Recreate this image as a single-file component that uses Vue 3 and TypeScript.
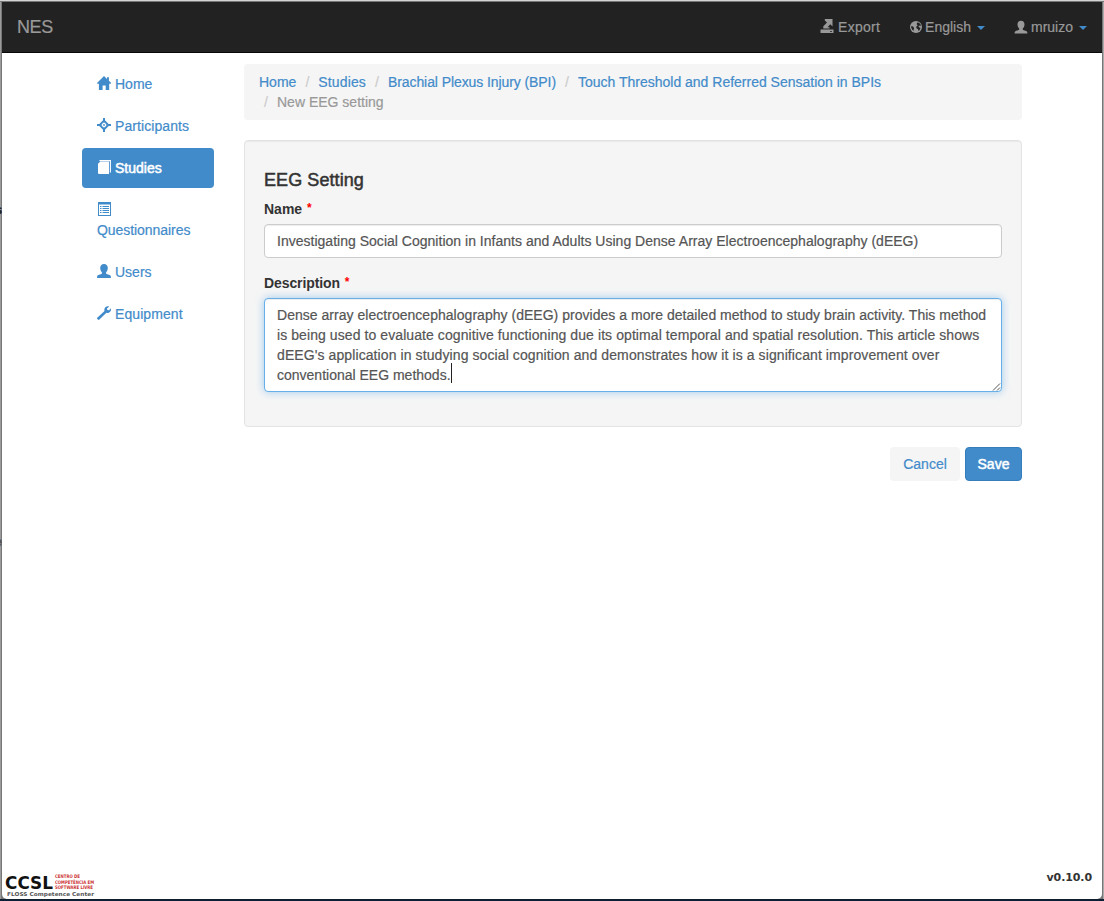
<script setup lang="ts">
interface Item { id: string; label: string; active?: boolean }
const items: Item[] = [
  { id: 'home', label: 'Home' },
  { id: 'participants', label: 'Participants' },
  { id: 'studies', label: 'Studies', active: true },
  { id: 'questionnaires', label: 'Questionnaires' },
  { id: 'users', label: 'Users' },
  { id: 'equipment', label: 'Equipment' },
]
const crumbs = [
  { id: 'c-home', label: 'Home' },
  { id: 'c-studies', label: 'Studies' },
  { id: 'c-bpi', label: 'Brachial Plexus Injury (BPI)' },
  { id: 'c-touch', label: 'Touch Threshold and Referred Sensation in BPIs' },
]
const lines = [
  'Dense array electroencephalography (dEEG) provides a more detailed method to study brain activity. This method',
  'is being used to evaluate cognitive functioning due its optimal temporal and spatial resolution. This article shows',
  "dEEG's application in studying social cognition and demonstrates how it is a significant improvement over",
  'conventional EEG methods.',
]
</script>

<template>
  <div class="desktop">
    <div class="edge-text edge-s">s</div>
    <div class="edge-text edge-e">e</div>
    <div class="window">
      <header class="navbar">
        <a class="brand">NES</a>
        <nav class="top-links">
          <a class="export">
            <svg class="icon" viewBox="0 0 14 14"><path d="M.5 10.500h13v3.500H.5zM4.800 0h7.700v7.500L10.300 5.300 7.500 8.200h2v1.300H3.300V7.200L7 3.500 4.800 1.500z" /><path class="cut" d="M10 11.900h2v.8h-2z" /></svg>
            <span>Export</span>
          </a>
          <a class="english">
            <svg class="icon" viewBox="0 0 14 14"><circle cx="7" cy="7" r="6" /><path class="cut" d="M8.200 2.400 10 2.800 11.600 4.500 12 6 10.600 5.500 9.400 6.600 10.400 7.500 11.500 7.800 10.700 10 9.500 10.900 9 9.200 7.500 8.200 7.200 6.700 8.700 5.300 7.600 4.300zM2.300 6 4 6.500 5.200 8.300 4.600 9.500 4.900 11 3.200 9.800 2.200 7.800z" /></svg>
            <span>English</span><i class="caret"></i>
          </a>
          <a class="user">
            <svg class="icon" viewBox="0 0 14 14"><path d="M7 .7c2.300 0 3.500 1.500 3.500 3.700 0 1.700-.8 3.200-1.700 4v1.100c0 .7 3.500 1.100 4.200 2.100.3.500.4 1.200.4 1.900H.6c0-.7.1-1.400.4-1.900.7-1 4.200-1.400 4.200-2.100V8.400c-.9-.8-1.700-2.300-1.700-4C3.500 2.200 4.700.7 7 .7z" /></svg>
            <span>mruizo</span><i class="caret"></i>
          </a>
        </nav>
      </header>

      <div class="page">
        <aside class="sidebar">
          <a v-for="item in items" :key="item.id" class="side-link" :class="[item.id, { active: item.active }]">
            <svg class="icon" viewBox="0 0 14 14">
              <path v-if="item.id === 'home'" d="M7 0l3 2.900V1.300h1.900v3.400L14.200 7l-.5.700H12.200V14H8.700V9.500H5.600V14H1.900V7.700H.4L0 7z" />
              <g v-else-if="item.id === 'participants'">
                <path d="M6 0h2v4.500H6zM6 9.500h2V14H6zM0 6h4.500v2H0zM9.500 6H14v2H9.500z" />
                <path d="M7 2.700 11.300 7 7 11.300 2.700 7z" fill="none" stroke="currentColor" stroke-width="1.900" /><circle cx="7" cy="7" r=".9" />
              </g>
              <g v-else-if="item.id === 'studies'">
                <path d="M1 3.800 3.300 1.600H12V14H1.800L1 13.200z" />
                <path d="M2.500.6h10.900v12" fill="none" stroke="currentColor" stroke-width="1.100" />
              </g>
              <g v-else-if="item.id === 'questionnaires'">
                <path d="M1 0h13v14H1zM2 2.500V13h11V2.500z" fill-rule="evenodd" />
                <path d="M3 4h1.500v1H3zM5.500 4H12v1H5.500zM3 6h1.500v1H3zM5.500 6H12v1H5.500zM3 8h1.500v1H3zM5.500 8H12v1H5.500zM3 10h1.500v1H3zM5.500 10H12v1H5.500z" />
              </g>
              <path v-else-if="item.id === 'users'" d="M7 0c2.500 0 3.800 1.700 3.800 4 0 1.800-.8 3.400-1.700 4.200v1.300c0 .7 3.700 1.200 4.500 2.200.3.500.4 1.300.4 2.300H0c0-1 .1-1.800.4-2.300.8-1 4.500-1.500 4.500-2.200V8.200C4 7.400 3.200 5.800 3.200 4 3.200 1.700 4.500 0 7 0z" />
              <path v-else d="M12.200.4 10 2.400l.3 1.600 1.700.2 2-1.900c.3 1.400-.1 2.800-1.100 3.700-1 .9-2.300 1.100-3.500.7L2.400 13.600c-.5.4-1.100.4-1.500 0l-.5-.5c-.4-.4-.4-1.100.1-1.500L7.500 4.900c-.4-1.200-.1-2.600.8-3.600C9.300.3 10.900-.1 12.200.4z" />
            </svg>
            <br v-if="item.id === 'questionnaires'" /><span>{{ item.label }}</span>
          </a>
        </aside>

        <main class="content">
          <div class="breadcrumb">
            <div class="crumb-row">
              <template v-for="(c, i) in crumbs" :key="c.id">
                <b v-if="i" class="slash">/</b><a :class="c.id">{{ c.label }}</a>
              </template>
            </div>
            <div class="crumb-row second"><b class="slash">/</b><span class="c-new">New EEG setting</span></div>
          </div>

          <section class="well">
            <h4><span>EEG Setting</span></h4>
            <label><span class="l-name">Name</span> <em>*</em></label>
            <div class="control"><span class="v-name">Investigating Social Cognition in Infants and Adults Using Dense Array Electroencephalography (dEEG)</span></div>
            <label><span class="l-desc">Description</span> <em>*</em></label>
            <div class="control area">
              <div v-for="(line, i) in lines" :key="i" class="line"><span :class="'v-line' + i">{{ line }}</span><i v-if="i === 3" class="cursor"></i></div>
              <svg class="grip" viewBox="0 0 9 9"><path d="M1 8.500 8 1.500M5 8.500 8 5.500" /></svg>
            </div>
          </section>

          <div class="actions">
            <a class="btn cancel"><span>Cancel</span></a>
            <a class="btn save"><span>Save</span></a>
          </div>
        </main>
      </div>

      <footer class="footer">
        <div class="logo">
          <div class="logo-top">
            <svg class="ccsl" viewBox="0 0 49 17"><text x="0" y="15.500" textLength="48" lengthAdjust="spacingAndGlyphs">CCSL</text></svg>
            <svg class="centro" viewBox="0 0 42 17"><text x="1" y="4.400" textLength="25" lengthAdjust="spacingAndGlyphs">CENTRO DE</text><text x="1" y="9.900" textLength="39" lengthAdjust="spacingAndGlyphs">COMPETÊNCIA EM</text><text x="1" y="15.400" textLength="38" lengthAdjust="spacingAndGlyphs">SOFTWARE LIVRE</text></svg>
          </div>
          <svg class="floss" viewBox="0 0 91 7"><text x="2" y="5.500" textLength="87" lengthAdjust="spacingAndGlyphs">FLOSS Competence Center</text></svg>
        </div>
        <strong>v0.10.0</strong>
      </footer>
    </div>
  </div>
</template>

<style>
body { margin: 0; overflow: hidden; }
</style>

<style scoped>
* { box-sizing: border-box; }
.desktop { position: relative; width: 1104px; height: 901px; padding: 2px; background: linear-gradient(#d4d6d6 0 1px, #777 1px 2px, transparent 2px 899px, #0d1f30 899px), linear-gradient(90deg, #9b9b9b 0 1px, #777 1px 1102px, #777 1102px 1103px, #aaa 1103px); overflow: hidden; font: 14px/20px "Liberation Sans", Arial, sans-serif; color: #333; -webkit-text-stroke: .2px currentColor; }
.edge-text { position: absolute; left: -5px; width: 7px; overflow: hidden; font-size: 13px; font-weight: bold; line-height: 14px; color: #222; }
.edge-s { top: 203px; }
.edge-e { top: 535px; color: #555; }
.window { display: flex; flex-direction: column; height: 897px; background: #fff; border-radius: 0 0 5px 5px; overflow: hidden; }
.navbar { display: flex; justify-content: space-between; height: 51px; padding: 0 15px; background: #222; border-bottom: 1px solid #080808; color: #999; }
.brand { font-size: 18px; line-height: 50px; letter-spacing: -.4px; }
.top-links { display: flex; gap: 29px; line-height: 50px; }
.top-links a { display: flex; align-items: center; }
.icon { width: 14px; height: 14px; fill: currentColor; flex: none; -webkit-text-stroke: 0; }
.top-links .icon { margin: -1px 3px 0 0; }
.top-links .export .icon { margin: -3px 4px 0 0; }
.top-links .english .icon { margin-right: 2px; }
.export span { letter-spacing: .25px; }
.cut { fill: #222; }
.caret { border: 4px solid transparent; border-top-color: #428bca; border-bottom: 0; margin-left: 6px; margin-top: 2px; }
.page { display: flex; gap: 30px; padding: 11px 0 0 80px; flex: 1; }
.sidebar { display: flex; flex-direction: column; gap: 2px; width: 132px; }
.side-link { display: block; padding: 10px 15px; color: #428bca; border-radius: 4px; }
.side-link .icon { display: inline-block; vertical-align: -1px; margin-right: 4px; }
.side-link.active { background: #428bca; color: #fff; }
.side-link.active span { -webkit-text-stroke: .5px #fff; }
.participants span, .equipment span { letter-spacing: .08px; }
.questionnaires span { letter-spacing: -.06px; }
.content { width: 778px; }
.breadcrumb { height: 56px; padding: 8px 15px; background: #f5f5f5; border-radius: 4px; color: #428bca; }
.crumb-row { display: flex; height: 20px; white-space: nowrap; }
.slash { width: 22px; text-align: center; font-weight: normal; color: #ccc; }
.c-studies { letter-spacing: .13px; }
.c-bpi { letter-spacing: -.085px; }
.c-touch { letter-spacing: -.005px; }
.second { color: #999; margin-left: -4px; }
.well { height: 287px; margin-top: 20px; padding: 19px; border: 1px solid #e3e3e3; border-radius: 4px; background: #f5f5f5; box-shadow: inset 0 1px 1px rgba(0,0,0,.05); }
h4 { margin: 10px 0 9px; font-size: 18px; line-height: 20px; font-weight: normal; letter-spacing: .08px; -webkit-text-stroke: .5px #333; }
label { display: block; margin-bottom: 5px; font-weight: bold; -webkit-text-stroke: 0; }
label em { display: inline-block; height: 20px; margin-left: 1px; color: #f00; font-style: normal; font-size: 12px; vertical-align: top; line-height: 18px; }
.l-desc { letter-spacing: -.1px; }
.control { height: 34px; padding: 6px 12px; margin-bottom: 15px; border: 1px solid #ccc; border-radius: 4px; background: #fff; color: #555; white-space: nowrap; box-shadow: inset 0 1px 1px rgba(0,0,0,.075); }
.area { position: relative; height: 94px; border-color: #66afe9; box-shadow: inset 0 1px 1px rgba(0,0,0,.075), 0 0 8px rgba(102,175,233,.6); }
.line { display: flex; height: 20px; }
.v-name { letter-spacing: .015px; }
.v-line0 { letter-spacing: .028px; }
.v-line1 { letter-spacing: .08px; }
.v-line2 { letter-spacing: .095px; }
.cursor { width: 1px; height: 20px; margin-top: -2px; background: #222; }
.grip { position: absolute; right: 0; bottom: 0; width: 9px; height: 9px; fill: none; stroke: #444; stroke-width: .9; }
.actions { display: flex; justify-content: flex-end; gap: 5px; margin-top: 20px; }
.btn { height: 34px; padding: 7px 0; text-align: center; border-radius: 4px; }
.cancel { width: 70px; background: #f5f5f5; color: #428bca; }
.save { width: 57px; padding: 6px 0; background: #428bca; border: 1px solid #357ebd; color: #fff; -webkit-text-stroke: .5px #fff; }
.footer { display: flex; justify-content: space-between; height: 27px; padding: 0 10px 0 3px; }
.logo { display: flex; flex-direction: column; width: 91px; -webkit-text-stroke: 0; }
.logo-top { display: flex; height: 18px; }
.ccsl { width: 49px; height: 17px; margin-top: 1px; font: bold 18.500px "DejaVu Sans", sans-serif; fill: #111; overflow: visible; }
.centro { width: 42px; height: 17px; margin-top: 2px; font: bold 4.900px "DejaVu Sans", sans-serif; fill: #c33; overflow: visible; }
.floss { width: 91px; height: 7px; font: bold 5.300px "DejaVu Sans", sans-serif; fill: #555; overflow: visible; }
.footer strong { font: bold 11px/11px "DejaVu Sans", sans-serif; -webkit-text-stroke: 0; letter-spacing: -.1px; }
</style>
